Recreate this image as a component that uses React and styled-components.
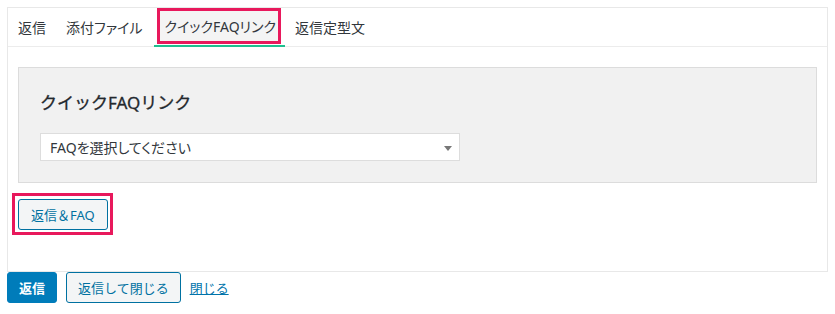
import React from 'react'
import styled, { createGlobalStyle } from 'styled-components'

const Global = createGlobalStyle`
  body {
    margin: 0;
    background: #fff;
    font-family: "Noto Sans", "Noto Sans CJK JP", sans-serif;
    color: #32373c;
  }
`

const Page = styled.div`
  padding: 7px 0 0 7px;
  width: 821px;
`

const Panel = styled.div`
  border: 1px solid #e8e8e8;
  background: #fff;
`

const TabBar = styled.div`
  display: flex;
  height: 38px;
  border-bottom: 1px solid #ececec;
  font-feature-settings: "palt";
`

const Tab = styled.div`
  display: flex;
  align-items: ${p => (p.$active ? 'flex-start' : 'center')};
  padding: ${p => (p.$active ? '0 4px 0 3px' : '0 10px')};
  margin-right: ${p => p.$gap || 0}px;
  font-size: 14px;
  color: #32373c;
  border-bottom: 2px solid ${p => (p.$active ? '#1fbf8f' : 'transparent')};
  margin-bottom: -1px;
  white-space: nowrap;
`

const Marked = styled.span`
  display: inline-flex;
  align-items: center;
  border: 3px solid #e8185c;
  background: #f4f4f4;
  height: 30px;
  padding: 0 2px 0 4px;
`

const Body = styled.div`
  padding: 20px 10px 36px 10px;
`

const FaqBox = styled.div`
  background: #f1f1f1;
  border: 1px solid #dcdcdc;
  padding: 23px 21px 21px;
`

const Heading = styled.h3`
  margin: 0 0 18px;
  font-size: 17px;
  line-height: 24px;
  font-weight: 400;
  color: #23282d;
  -webkit-text-stroke: 0.3px #23282d;
`

const Select = styled.div`
  position: relative;
  height: 26px;
  width: 409px;
  border: 1px solid #dddddd;
  background: #fff;
  display: flex;
  align-items: center;
  padding-left: 9px;
  font-size: 14px;
  font-feature-settings: "palt";
  color: #32373c;
`

const Arrow = styled.span`
  position: absolute;
  right: 7px;
  top: 12px;
  width: 0;
  height: 0;
  border-left: 4px solid transparent;
  border-right: 4px solid transparent;
  border-top: 5px solid #777;
`

const Outline = styled.div`
  display: inline-block;
  margin: 10px 0 0 -6px;
  border: 3px solid #e8185c;
  padding: 3px 2px 2px 3px;
`

const Button = styled.button`
  height: 31px;
  padding: 0 ${p => p.$pad || 10}px;
  border-radius: 3px;
  font-family: inherit;
  font-size: 13px;
  cursor: pointer;
  display: inline-flex;
  align-items: center;
  border: 1px solid ${p => (p.$primary ? '#007cba' : '#0071a1')};
  background: ${p => (p.$primary ? '#007cba' : '#f3f5f6')};
  color: ${p => (p.$primary ? '#fff' : '#0071a1')};
  font-weight: ${p => (p.$primary ? 600 : 400)};
`

const Actions = styled.div`
  display: flex;
  align-items: center;
  gap: 9px;
`

const TextLink = styled.a`
  font-size: 13px;
  color: #0073aa;
  text-decoration: underline;
  cursor: pointer;
`

export default function App() {
  return (
    <Page>
      <Global />
      <Panel>
        <TabBar>
          <Tab>返信</Tab>
          <Tab $gap={2}>添付ファイル</Tab>
          <Tab $active>
            <Marked>クイックFAQリンク</Marked>
          </Tab>
          <Tab>返信定型文</Tab>
        </TabBar>
        <Body>
          <FaqBox>
            <Heading>クイックFAQリンク</Heading>
            <Select>
              FAQを選択してください
              <Arrow />
            </Select>
          </FaqBox>
          <Outline>
            <Button $pad={12}>返信＆FAQ</Button>
          </Outline>
        </Body>
      </Panel>
      <Actions>
        <Button $primary $pad={11}>返信</Button>
        <Button $pad={11}>返信して閉じる</Button>
        <TextLink>閉じる</TextLink>
      </Actions>
    </Page>
  )
}
